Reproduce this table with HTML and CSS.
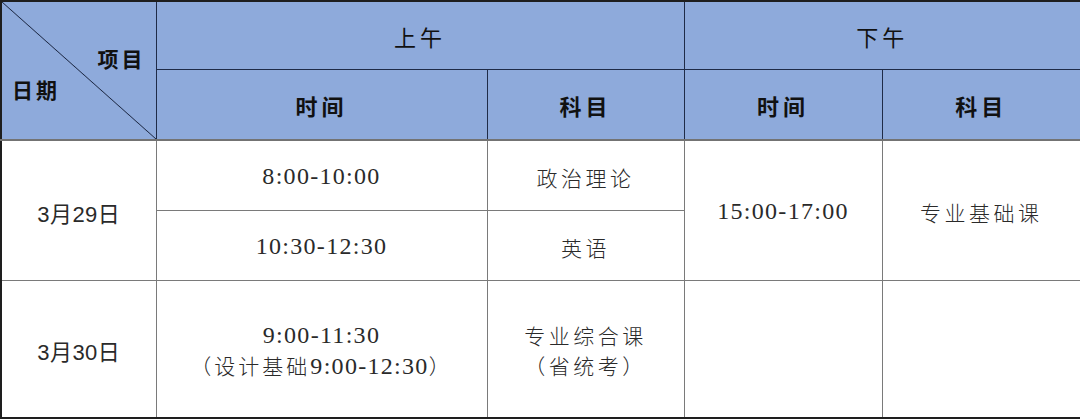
FILE: index.html
```html
<!DOCTYPE html>
<html lang="zh-CN">
<head>
<meta charset="utf-8">
<title>考试安排</title>
<link rel="stylesheet" href="styles.css">
</head>
<body>
<table class="sched">
  <colgroup>
    <col class="c1"><col class="c2"><col class="c3"><col class="c4"><col class="c5">
  </colgroup>
  <thead>
    <tr class="h1">
      <th rowspan="2" class="diag">
        <div class="diag-in">
          <span class="lab-item">项目</span>
          <span class="lab-date">日期</span>
        </div>
      </th>
      <th colspan="2" class="period">上午</th>
      <th colspan="2" class="period">下午</th>
    </tr>
    <tr class="h2">
      <th class="sub">时间</th>
      <th class="sub">科目</th>
      <th class="sub">时间</th>
      <th class="sub">科目</th>
    </tr>
  </thead>
  <tbody>
    <tr class="r1">
      <td rowspan="2" class="date">3月29日</td>
      <td class="num">8:00-10:00</td>
      <td class="subj">政治理论</td>
      <td rowspan="2" class="num">15:00-17:00</td>
      <td rowspan="2" class="subj">专业基础课</td>
    </tr>
    <tr class="r2">
      <td class="num">10:30-12:30</td>
      <td class="subj">英语</td>
    </tr>
    <tr class="r3">
      <td class="date">3月30日</td>
      <td class="num two"><span class="ln">9:00-11:30</span><span class="ln"><span class="cj">（设计基础</span>9:00-12:30<span class="cj">）</span></span></td>
      <td class="subj two"><span class="ln">专业综合课</span><span class="ln">（省统考）</span></td>
      <td></td>
      <td></td>
    </tr>
  </tbody>
</table>
</body>
</html>
```
FILE: styles.css
```css
html, body {
  margin: 0;
  padding: 0;
  background: #ffffff;
}

.sched {
  border-collapse: collapse;
  table-layout: fixed;
  width: 1080px;
  border: 2px solid #1e1e1e;
  font-family: "Noto Sans CJK SC", "Liberation Serif", sans-serif;
}

.c1 { width: 155px; }
.c2 { width: 331px; }
.c3 { width: 197px; }
.c4 { width: 198px; }
.c5 { width: 199px; }

.sched th {
  background-color: #8eaadb;
  border: 1px solid #1f2b47;
  color: #111;
  padding: 0;
  text-align: center;
  vertical-align: middle;
}

.h1 { height: 68px; }
.h2 { height: 69px; }

.sched .h2 th,
.sched th.diag {
  border-bottom: 2px solid #737373;
}

.period {
  font-size: 22px;
  font-weight: 400;
  letter-spacing: 4px;
  padding-top: 4px;
}

.sub {
  font-size: 22px;
  font-weight: 700;
  letter-spacing: 4px;
  padding-top: 4px;
}

.sched th.diag {
  background-image: linear-gradient(to top right,
    transparent calc(50% - 0.8px),
    #1f2b47 50%,
    transparent calc(50% + 0.8px));
}

.diag-in {
  display: flex;
  flex-direction: column;
  height: 137px;
  box-sizing: border-box;
  padding: 43px 10px 0 10px;
  font-size: 21px;
  font-weight: 700;
  letter-spacing: 3px;
  line-height: 26px;
}

.lab-item {
  align-self: flex-end;
}

.lab-date {
  align-self: flex-start;
  margin-top: 5px;
}

.sched td {
  border: 1px solid #7a7a7a;
  color: #2a2a2a;
  padding: 3px 0 0 0;
  text-align: center;
  vertical-align: middle;
}

.r1 { height: 70px; }
.r2 { height: 70px; }
.r3 { height: 138px; }

.date {
  font-family: "Liberation Sans", "Noto Sans CJK SC", sans-serif;
  font-size: 22px;
  letter-spacing: 0.5px;
}

.num {
  font-family: "Liberation Serif", "Noto Sans CJK SC", serif;
  font-size: 24px;
  letter-spacing: 1.3px;
}

.subj {
  font-family: "Noto Sans CJK SC", sans-serif;
  font-size: 21px;
  font-weight: 300;
  letter-spacing: 3.5px;
}

.two .ln {
  display: block;
  line-height: 30px;
}

.cj {
  font-family: "Noto Sans CJK SC", sans-serif;
  font-size: 21px;
  font-weight: 300;
  letter-spacing: 3px;
}
```
